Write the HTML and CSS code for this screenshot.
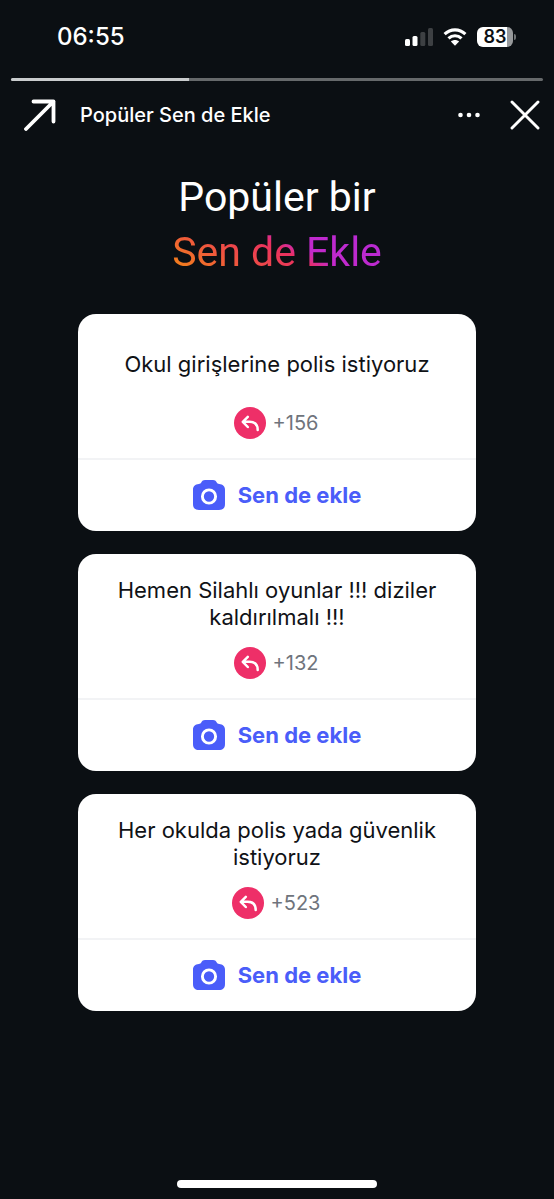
FILE: index.html
```html
<!DOCTYPE html>
<html lang="tr">
<head>
<meta charset="utf-8">
<meta name="viewport" content="width=device-width, initial-scale=1">
<title>Popüler Sen de Ekle</title>
<link rel="stylesheet" href="styles.css">
</head>
<body>
<svg class="sprite" aria-hidden="true">
  <symbol id="reply" viewBox="0 0 32 32">
    <circle cx="16" cy="16" r="16" fill="#ee2f68"/>
    <path d="M13.800 9.800 8.800 14.800l5 5.200M9.200 14.800h6.300c5.400 0 8.200 2.800 8.200 8.200" fill="none" stroke="#fff" stroke-width="2.500" stroke-linecap="round" stroke-linejoin="round"/>
  </symbol>
  <symbol id="camera" viewBox="0 0 32 32">
    <path d="M12 1h8c1.800 0 2.800.7 3.600 2.200.6 1.200 1.300 1.600 2.600 1.700 3.600.3 5.800 2.300 5.800 5.800V25c0 4-2.200 6-6 6H6c-3.800 0-6-2-6-6V10.700c0-3.500 2.200-5.500 5.800-5.800 1.300-.1 2-.5 2.600-1.700C9.200 1.700 10.200 1 12 1Z" fill="#4a5df9"/>
    <circle cx="16" cy="17.500" r="6.600" fill="none" stroke="#fff" stroke-width="2.900"/>
  </symbol>
</svg>
<div class="screen">
  <div class="status">
    <time class="clock">06:55</time>
    <div class="indicators">
      <svg width="28" height="18" viewBox="0 0 28 18" aria-hidden="true">
        <rect x="0" y="11" width="5" height="7" rx="1.500" fill="#fff"/>
        <rect x="7.500" y="8" width="5" height="10" rx="1.500" fill="#fff"/>
        <rect x="15.300" y="4" width="5" height="14" rx="1.500" fill="#3d4043"/>
        <rect x="23" y="0" width="5" height="18" rx="1.500" fill="#3d4043"/>
      </svg>
      <svg width="24" height="18" viewBox="0 0 24 18" aria-hidden="true">
        <path d="M1.600 6.200C7.500.4 16.500.4 22.400 6.200M5.500 10.400c3.700-3.600 9.300-3.600 13 0" fill="none" stroke="#fff" stroke-width="3.100"/>
        <path d="M12 17.800 7.900 13.600c2.400-2 5.800-2 8.200 0Z" fill="#fff"/>
      </svg>
      <div class="battery"><span class="battery-level">83</span></div>
    </div>
  </div>
  <div class="progress"><div class="progress-fill"></div></div>
  <header class="bar">
    <svg width="32" height="32" viewBox="0 0 32 32" aria-hidden="true">
      <path d="M2 30 29.500 2.500M9.500 2.500h20v20" fill="none" stroke="#fff" stroke-width="3.800" stroke-linecap="round" stroke-linejoin="round"/>
    </svg>
    <span class="bar-title">Popüler Sen de Ekle</span>
    <button class="icon-button" type="button" aria-label="Diğer seçenekler">
      <svg width="22" height="30" viewBox="0 0 22 30" fill="#fff" aria-hidden="true"><circle cx="2.500" cy="15" r="2.300"/><circle cx="11" cy="15" r="2.300"/><circle cx="19.500" cy="15" r="2.300"/></svg>
    </button>
    <button class="icon-button" type="button" aria-label="Kapat">
      <svg width="30" height="30" viewBox="0 0 30 30" aria-hidden="true"><path d="m2 2 26 26M28 2 2 28" stroke="#fff" stroke-width="2.900" stroke-linecap="round"/></svg>
    </button>
  </header>
  <main class="content">
    <h1 class="heading">Popüler bir<br><span class="heading-accent">Sen de Ekle</span></h1>
    <article class="card">
      <div class="card-body">
        <div class="card-text"><h2 class="prompt">Okul girişlerine polis istiyoruz</h2></div>
        <div class="count"><svg width="32" height="32" aria-hidden="true"><use href="#reply"/></svg><span>+156</span></div>
      </div>
      <button class="add" type="button"><svg width="32" height="32" aria-hidden="true"><use href="#camera"/></svg><span>Sen de ekle</span></button>
    </article>
    <article class="card">
      <div class="card-body">
        <div class="card-text"><h2 class="prompt">Hemen Silahlı oyunlar !!! diziler kaldırılmalı !!!</h2></div>
        <div class="count"><svg width="32" height="32" aria-hidden="true"><use href="#reply"/></svg><span>+132</span></div>
      </div>
      <button class="add" type="button"><svg width="32" height="32" aria-hidden="true"><use href="#camera"/></svg><span>Sen de ekle</span></button>
    </article>
    <article class="card">
      <div class="card-body">
        <div class="card-text"><h2 class="prompt">Her okulda polis yada güvenlik istiyoruz</h2></div>
        <div class="count"><svg width="32" height="32" aria-hidden="true"><use href="#reply"/></svg><span>+523</span></div>
      </div>
      <button class="add" type="button"><svg width="32" height="32" aria-hidden="true"><use href="#camera"/></svg><span>Sen de ekle</span></button>
    </article>
  </main>
  <div class="home"></div>
</div>
</body>
</html>
```

FILE: styles.css
```css
* {
  box-sizing: border-box;
}

body {
  margin: 0;
  background: #0b0f13;
  color: #fff;
  font-family: Inter, "Liberation Sans", sans-serif;
}

svg {
  display: block;
  flex: none;
}

button {
  margin: 0;
  padding: 0;
  border: 0;
  background: none;
  font: inherit;
  cursor: pointer;
}

.sprite {
  position: absolute;
  width: 0;
  height: 0;
}

.screen {
  display: flex;
  flex-direction: column;
  min-height: 100vh;
}

.status {
  display: flex;
  align-items: center;
  justify-content: space-between;
  padding: 22px 38px 26px 57px;
}

.clock {
  font-size: 24px;
  line-height: 30px;
  font-weight: 500;
}

.indicators {
  display: flex;
  align-items: center;
  gap: 10px;
}

.battery {
  display: flex;
  align-items: center;
  gap: 1px;
}

.battery::after {
  content: "";
  width: 2px;
  height: 6px;
  border-radius: 0 2px 2px 0;
  background: #707375;
}

.battery-level {
  width: 36px;
  border-radius: 6px;
  background: linear-gradient(90deg, #fff 83%, #97999b 83%);
  color: #0b0f13;
  font-size: 18px;
  line-height: 20px;
  font-weight: 600;
  text-align: center;
}

.progress {
  height: 3px;
  margin: 0 11px;
  border-radius: 2px;
  background: #66696b;
}

.progress-fill {
  width: 33.5%;
  height: 100%;
  border-radius: 2px 0 0 2px;
  background: #c9cccd;
}

.bar {
  display: flex;
  align-items: center;
  gap: 30px;
  padding: 18px 14px 18px 24px;
}

.bar-title {
  flex: 1;
  margin-left: -6px;
  font-size: 20px;
  line-height: 24px;
  font-weight: 500;
}

.content {
  flex: 1;
  display: flex;
  flex-direction: column;
  gap: 23px;
  padding: 21px 78px 24px;
}

.heading {
  margin: 0 0 11px;
  font-family: Roboto, sans-serif;
  font-size: 41px;
  line-height: 55px;
  font-weight: 400;
  text-align: center;
}

.heading-accent {
  background: linear-gradient(31deg, #f27a20 10%, #ee4a48 36%, #ea3060 53%, #c329cb 62%, #b52bd6 100%);
  background-clip: text;
  -webkit-background-clip: text;
  color: transparent;
}

.card {
  border-radius: 18px;
  background: #fff;
  color: #101216;
  overflow: hidden;
}

.card-body {
  padding: 23px 32px 19px;
  border-bottom: 2px solid #f2f3f5;
}

.card-text {
  display: grid;
  align-items: center;
  min-height: 54px;
}

.prompt {
  margin: 0;
  font-size: 22px;
  line-height: 27px;
  font-weight: 400;
  text-align: center;
}

.count {
  display: flex;
  align-items: center;
  justify-content: center;
  gap: 7px;
  margin-top: 16px;
  padding-right: 2px;
  color: #6f747c;
  font-size: 20px;
  line-height: 24px;
}

.add {
  display: flex;
  align-items: center;
  justify-content: center;
  gap: 13px;
  width: 100%;
  padding: 19px 19px 20px;
  color: #4a5df9;
  font-size: 22px;
  line-height: 32px;
  font-weight: 700;
}

.home {
  align-self: center;
  width: 36%;
  height: 8px;
  margin-bottom: 11px;
  border-radius: 4px;
  background: #fff;
}
```
